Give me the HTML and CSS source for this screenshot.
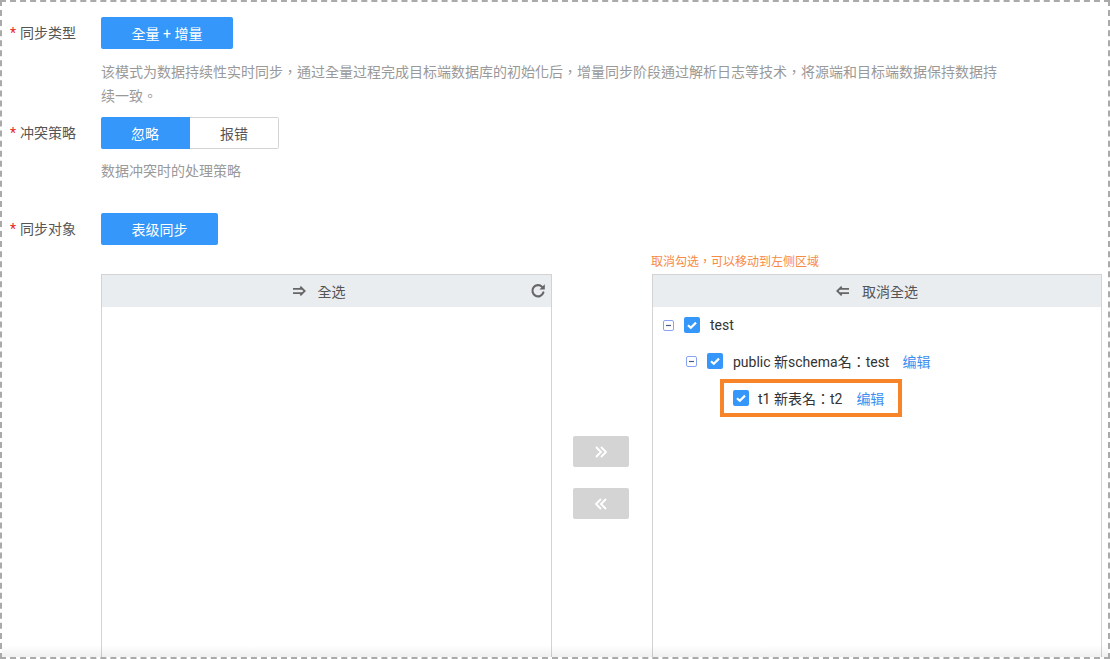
FILE: index.html
```html
<!DOCTYPE html>
<html>
<head>
<meta charset="utf-8">
<title>同步配置</title>
<link rel="stylesheet" href="styles.css">
</head>
<body>
<div class="frame">
  <div class="form">
    <div class="label"><span class="req">*</span>同步类型</div>
    <div class="field">
      <button class="btn primary w132">全量 + 增量</button>
      <p class="desc desc1">该模式为数据持续性实时同步，通过全量过程完成目标端数据库的初始化后，增量同步阶段通过解析日志等技术，将源端和目标端数据保持数据持续一致。</p>
    </div>

    <div class="label row2"><span class="req">*</span>冲突策略</div>
    <div class="field row2">
      <div class="seg">
        <button class="seg-item active">忽略</button>
        <button class="seg-item">报错</button>
      </div>
      <p class="desc desc2">数据冲突时的处理策略</p>
    </div>

    <div class="label row3"><span class="req">*</span>同步对象</div>
    <div class="field row3">
      <button class="btn primary w117">表级同步</button>
      <div class="transfer">
        <div class="hint">取消勾选，可以移动到左侧区域</div>
        <div class="panel left">
          <div class="panel-head">
            <span class="head-inner">
              <svg class="head-icon" width="14" height="12" viewBox="0 0 14 12"><path d="M1 3.8h9.5M1 8.2h9.5" stroke="#666" stroke-width="1.8" fill="none"/><path d="M8.3 1.6l4.4 4.4-4.4 4.4" stroke="#666" stroke-width="1.8" fill="none"/></svg>
              全选
            </span>
            <svg class="refresh" width="16" height="16" viewBox="0 0 16 16"><path d="M13.4 9.4A5.6 5.6 0 1 1 12.1 3.9" stroke="#666" stroke-width="2.1" fill="none" stroke-linecap="round"/><path d="M14.8 1.2v5.4H9.4z" fill="#666"/></svg>
          </div>
          <div class="panel-body"></div>
        </div>
        <div class="moves">
          <button class="move">
            <svg width="14" height="12" viewBox="0 0 14 12"><path d="M2 1l5 5-5 5M7 1l5 5-5 5" stroke="#fff" stroke-width="1.8" fill="none"/></svg>
          </button>
          <button class="move">
            <svg width="14" height="12" viewBox="0 0 14 12"><path d="M12 1L7 6l5 5M7 1L2 6l5 5" stroke="#fff" stroke-width="1.8" fill="none"/></svg>
          </button>
        </div>
        <div class="panel right">
          <div class="panel-head">
            <span class="head-inner">
              <svg class="head-icon" width="14" height="12" viewBox="0 0 14 12"><path d="M3.5 3.8H13M3.5 8.2H13" stroke="#666" stroke-width="1.8" fill="none"/><path d="M5.7 1.6L1.3 6l4.4 4.4" stroke="#666" stroke-width="1.8" fill="none"/></svg>
              取消全选
            </span>
          </div>
          <div class="panel-body tree">
            <div class="node lvl0">
              <svg class="fold" width="11" height="11" viewBox="0 0 11 11"><rect x="0.5" y="0.5" width="10" height="10" rx="1.5" fill="#fff" stroke="#8aa2f2"/><path d="M3 5.5h5" stroke="#4d5b86" stroke-width="1.2"/></svg>
              <span class="cb"><svg width="16" height="16" viewBox="0 0 16 16"><path d="M4 8.2l2.8 2.6 5.2-5.2" stroke="#fff" stroke-width="2.2" fill="none"/></svg></span>
              <span class="name">test</span>
            </div>
            <div class="node lvl1">
              <svg class="fold" width="11" height="11" viewBox="0 0 11 11"><rect x="0.5" y="0.5" width="10" height="10" rx="1.5" fill="#fff" stroke="#8aa2f2"/><path d="M3 5.5h5" stroke="#4d5b86" stroke-width="1.2"/></svg>
              <span class="cb"><svg width="16" height="16" viewBox="0 0 16 16"><path d="M4 8.2l2.8 2.6 5.2-5.2" stroke="#fff" stroke-width="2.2" fill="none"/></svg></span>
              <span class="name">public 新schema名：test</span>
              <a class="edit">编辑</a>
            </div>
            <div class="node lvl2">
              <div class="mark">
                <span class="cb"><svg width="16" height="16" viewBox="0 0 16 16"><path d="M4 8.2l2.8 2.6 5.2-5.2" stroke="#fff" stroke-width="2.2" fill="none"/></svg></span>
                <span class="name">t1 新表名：t2</span>
                <a class="edit">编辑</a>
              </div>
            </div>
          </div>
        </div>
      </div>
    </div>
  </div>
</div>
</body>
</html>
```
FILE: styles.css
```css
* { box-sizing: border-box; }
html, body { margin: 0; padding: 0; background: #fff; }
body {
  font-family: Roboto, "Noto Sans CJK TC", "Noto Sans CJK SC", sans-serif;
  font-size: 14px;
  color: #333;
}
.frame {
  position: relative;
  width: 1110px;
  height: 659px;
  border: 2px dashed #aaaaaa;
  overflow: hidden;
  padding: 15px 0 0 8px;
}
.frame::after {
  content: "";
  position: absolute;
  left: 0; right: 0; bottom: 0;
  height: 12px;
  background: linear-gradient(rgba(0,0,0,0), rgba(0,0,0,0.06));
  pointer-events: none;
}
.form {
  display: grid;
  grid-template-columns: 91px 1001px;
  align-items: start;
}
.label {
  line-height: 32px;
  height: 32px;
  color: #555;
  white-space: nowrap;
}
.req {
  color: #e6262b;
  margin-right: 4px;
}
.row2 { margin-top: 9px; }
.row3 { margin-top: 30px; }
.btn {
  display: block;
  height: 32px;
  border: 0;
  border-radius: 2px;
  font-family: inherit;
  font-size: 14px;
  padding: 0;
}
.primary { background: #3497f9; color: #fff; }
.w132 { width: 132px; }
.w117 { width: 117px; }
.desc {
  margin: 0;
  color: #999;
  line-height: 24px;
  max-width: 902px;
}
.desc1 { margin-top: 11px; }
.desc2 { margin-top: 10px; }
.seg {
  display: flex;
  width: 178px;
  height: 32px;
}
.seg-item {
  flex: 0 0 89px;
  border: 1px solid #d4d4d4;
  background: #fff;
  color: #555;
  font-family: inherit;
  font-size: 14px;
  padding: 0;
  border-left: 0;
}
.seg-item.active {
  background: #3497f9;
  border-color: #3497f9;
  color: #fff;
  border-radius: 2px 0 0 2px;
}
.seg-item:last-child { border-radius: 0 2px 2px 0; }
.transfer {
  margin-top: 7px;
  display: grid;
  grid-template-columns: 451px 100px 450px;
  grid-template-rows: 20px 400px;
  row-gap: 2px;
}
.hint {
  grid-column: 3;
  grid-row: 1;
  font-size: 12px;
  line-height: 20px;
  color: #f78a45;
  margin-left: -1px;
}
.panel {
  grid-row: 2;
  border: 1px solid #d3d3d3;
  display: flex;
  flex-direction: column;
}
.panel.left { grid-column: 1; }
.panel.right { grid-column: 3; }
.panel-head {
  position: relative;
  height: 32px;
  background: #eaedf0;
  display: flex;
  align-items: center;
  justify-content: center;
  color: #555;
}
.panel.left .panel-head { padding-right: 16px; }
.head-inner {
  display: flex;
  align-items: center;
}
.head-icon { margin-right: 12px; }
.refresh {
  position: absolute;
  right: 5px;
  top: 8px;
}
.moves {
  grid-column: 2;
  grid-row: 2;
  padding-top: 162px;
  padding-right: 2px;
  display: flex;
  flex-direction: column;
  align-items: center;
  gap: 21px;
}
.move {
  width: 56px;
  height: 31px;
  border: 0;
  border-radius: 2px;
  background: #d4d4d4;
  display: flex;
  align-items: center;
  justify-content: center;
  padding: 0;
}
.tree { padding-left: 10px; }
.node {
  height: 36px;
  display: flex;
  align-items: center;
}
.lvl1 { padding-left: 23px; }
.lvl2 { padding-left: 57px; padding-top: 2px; }
.fold { flex: none; margin-right: 10px; }
.cb {
  flex: none;
  width: 16px;
  height: 16px;
  border-radius: 2px;
  background: #3497f9;
  display: block;
}
.cb svg { display: block; }
.lvl0 .cb, .lvl1 .cb { margin-right: 10px; }
.name { color: #333; white-space: nowrap; }
.edit {
  color: #3e8ef0;
  margin-left: 13px;
  cursor: pointer;
}
.mark {
  display: flex;
  align-items: center;
  height: 38px;
  border: 4px solid #f8842a;
  padding: 0 14px 0 9px;
}
.mark .cb { margin-right: 9px; }
.mark .edit { margin-left: 14px; }
```
